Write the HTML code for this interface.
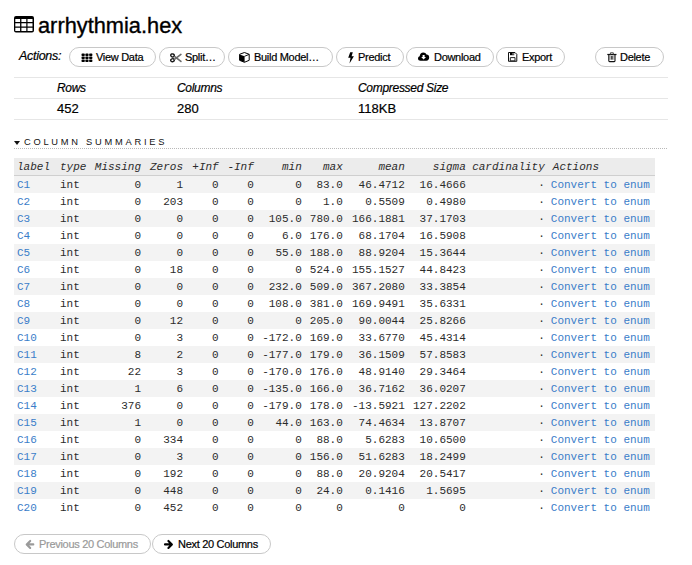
<!DOCTYPE html>
<html><head><meta charset="utf-8">
<style>
html,body{margin:0;padding:0;background:#fff;}
body{width:692px;height:565px;overflow:hidden;position:relative;font-family:"Liberation Sans",sans-serif;color:#000;}
.btn .tx,.th2,.td2,.actlbl{-webkit-text-stroke:0.2px currentColor;}
.abs{position:absolute;}
.title{left:38px;top:11px;font-size:21.8px;line-height:30px;white-space:nowrap;color:#000;-webkit-text-stroke:0.35px #000;}
.ticon{left:13.7px;top:16.1px;line-height:0;}
.actlbl{left:19px;top:48px;font-size:12.5px;letter-spacing:-0.3px;font-style:italic;line-height:16px;color:#000;}
.btn{position:absolute;top:47px;height:18px;border:1px solid #c8c8c8;border-radius:10px;box-sizing:content-box;font-size:11px;letter-spacing:-0.3px;line-height:18px;white-space:nowrap;color:#000;background:#fff;}
.btn svg{position:absolute;}
.btn .tx{position:absolute;top:0;}
.hline{position:absolute;left:14px;width:654px;height:1px;background:#e6e6e6;}
.th2{position:absolute;font-style:italic;font-size:12px;letter-spacing:-0.3px;line-height:14px;white-space:nowrap;}
.td2{position:absolute;font-size:13px;line-height:14px;white-space:nowrap;}
.sect{left:24px;top:135.4px;font-size:9.3px;letter-spacing:2.75px;line-height:14px;white-space:nowrap;color:#111;}
.tri{left:14px;top:141px;width:0;height:0;border-left:3px solid transparent;border-right:3px solid transparent;border-top:4px solid #111;}
.dots{position:absolute;left:14px;top:148px;width:654px;height:1px;background:repeating-linear-gradient(to right,#b8b8b8 0,#b8b8b8 1px,transparent 1px,transparent 2px);}
table.cs{position:absolute;left:14px;top:158px;border-collapse:collapse;font-family:"Liberation Mono",monospace;font-size:11px;color:#2b2b2b;table-layout:fixed;}
table.cs th{background:#ececec;font-style:italic;font-weight:normal;height:17px;padding:0 4px;text-align:right;border-bottom:1px solid #cfcfcf;white-space:nowrap;}
table.cs td{height:17px;padding:0 4px;text-align:right;white-space:nowrap;}
table.cs tr:nth-child(odd) td{background:#f3f3f3;}
table.cs th:nth-child(1),table.cs th:nth-child(2),table.cs td:nth-child(1),table.cs td:nth-child(2),table.cs th:nth-child(12),table.cs td:nth-child(12){text-align:left;}
table.cs a{color:#3a7dc9;}
table.cs td:nth-child(12) a{margin-left:-2px;}
table.cs th:nth-child(12),table.cs td:nth-child(12){padding:0 0 0 4px;}
table.cs th:nth-child(11),table.cs td:nth-child(11){padding:0 4px 0 1px;}
table.cs th:nth-child(2),table.cs td:nth-child(2){padding:0 3px 0 4px;}
table.cs th:nth-child(1),table.cs td:nth-child(1){padding:0 5px 0 3px;}
</style></head><body>
<div class="abs ticon"><svg width="20" height="17" viewBox="0 0 20 17"><path fill="#000" fill-rule="evenodd" d="M2 0h16a2 2 0 0 1 2 2v12.6a2 2 0 0 1-2 2H2a2 2 0 0 1-2-2V2a2 2 0 0 1 2-2z M1.3 3h4.8v2.9H1.3z M7.4 3h4.9v2.9H7.4z M13.5 3h5v2.9h-5z M1.3 7.3h4.8v3.1H1.3z M7.4 7.3h4.9v3.1H7.4z M13.5 7.3h5v3.1h-5z M1.3 11.7h4.8v3.4H1.3z M7.4 11.7h4.9v3.4H7.4z M13.5 11.7h5v3.4h-5z"/></svg></div>
<div class="abs title">arrhythmia.hex</div>
<div class="abs actlbl">Actions:</div>

<div class="btn" style="left:69px;width:85px">
<svg style="left:10.5px;top:5px" width="12" height="10" viewBox="0 0 12 10"><g fill="#000"><rect x="0.5" y="0.6" width="3.3" height="2.5" rx="0.8"/><rect x="4.3" y="0.6" width="3.3" height="2.5" rx="0.8"/><rect x="8.1" y="0.6" width="3.3" height="2.5" rx="0.8"/><rect x="0.5" y="3.6" width="3.3" height="2.5" rx="0.8"/><rect x="4.3" y="3.6" width="3.3" height="2.5" rx="0.8"/><rect x="8.1" y="3.6" width="3.3" height="2.5" rx="0.8"/><rect x="0.5" y="6.6" width="3.3" height="2.5" rx="0.8"/><rect x="4.3" y="6.6" width="3.3" height="2.5" rx="0.8"/><rect x="8.1" y="6.6" width="3.3" height="2.5" rx="0.8"/></g></svg>
<span class="tx" style="left:26px">View Data</span></div>

<div class="btn" style="left:159px;width:64px">
<svg style="left:10px;top:5px" width="12" height="10" viewBox="0 0 12 10"><g fill="none" stroke="#1a1a1a" stroke-width="1.4"><ellipse cx="2.5" cy="2.4" rx="1.8" ry="1.5" transform="rotate(20 2.5 2.4)"/><ellipse cx="2.5" cy="7.2" rx="1.8" ry="1.5" transform="rotate(-20 2.5 7.2)"/></g><path d="M4.8 3.6L10.9 8.4M4.8 6.2L10.9 1.4" stroke="#6a6a6a" stroke-width="1.6" stroke-linecap="round" fill="none"/></svg>
<span class="tx" style="left:25px">Split…</span></div>

<div class="btn" style="left:228px;width:103px">
<svg style="left:10px;top:4px" width="12" height="11" viewBox="0 0 12 11"><path d="M5.4 0.5L10.2 2.3V8.3L5.4 10.3L0.6 8.3V2.3Z" fill="none" stroke="#000" stroke-width="1" stroke-linejoin="round"/><path d="M0.6 2.5L5.6 4.3V10.3L0.6 8.3Z" fill="#000"/><path d="M5.5 4.3L10.2 2.4" stroke="#000" stroke-width="0.9"/></svg>
<span class="tx" style="left:25px">Build Model…</span></div>

<div class="btn" style="left:336px;width:66px">
<svg style="left:11px;top:4px" width="6" height="12" viewBox="0 0 6 12"><path d="M2.2 0.3H4.8L3.6 4.2H5.9L1.5 11.6L2.5 5.8H0.2Z" fill="#000"/></svg>
<span class="tx" style="left:21px">Predict</span></div>

<div class="btn" style="left:406px;width:86px">
<svg style="left:11px;top:4px" width="12" height="10" viewBox="0 0 12 10"><path d="M2.5 8.8C1.1 8.8 0 7.8 0 6.5C0 5.4 0.7 4.6 1.7 4.3C1.8 2.1 3.3 0.4 5.3 0.4C6.8 0.4 8 1.3 8.5 2.5C10.3 2.5 11.2 3.8 11.2 5.6C11.2 7.4 10 8.8 8.4 8.8Z" fill="#000"/><path d="M4.6 3H6.6V5.1H8L5.6 7.5L3.2 5.1H4.6Z" fill="#fff"/></svg>
<span class="tx" style="left:27px">Download</span></div>

<div class="btn" style="left:496px;width:67px">
<svg style="left:11px;top:4px" width="10" height="11" viewBox="0 0 10 11"><path d="M0.5 0.5H7L8.8 2.3V9.3H0.5Z" fill="none" stroke="#111" stroke-width="1"/><rect x="2" y="0.6" width="4.2" height="2.6" fill="#000"/><rect x="4.6" y="1" width="0.9" height="1.7" fill="#fff"/><path d="M2.3 5.6H7V8.9H2.3Z" fill="none" stroke="#222" stroke-width="1"/></svg>
<span class="tx" style="left:25px">Export</span></div>

<div class="btn" style="left:595px;width:67px">
<svg style="left:11px;top:3.8px" width="10" height="11" viewBox="0 0 10 11"><path d="M0.3 2.5H9.5" stroke="#111" stroke-width="1.2"/><path d="M3.2 2.2L3.8 0.8H6L6.6 2.2" fill="none" stroke="#555" stroke-width="1.1"/><rect x="2.4" y="3.2" width="5" height="4.6" fill="#b8b8b8"/><path d="M1.8 2.6V8.8Q1.8 9.6 2.6 9.6H7.2Q8 9.6 8 8.8V2.6" fill="none" stroke="#111" stroke-width="1.1"/><path d="M4.9 4V7.4" stroke="#111" stroke-width="1.1"/></svg>
<span class="tx" style="left:24px">Delete</span></div>

<div class="hline" style="top:77px"></div>
<div class="hline" style="top:98px"></div>
<div class="hline" style="top:119px"></div>
<div class="th2" style="left:57px;top:81px">Rows</div>
<div class="th2" style="left:177px;top:81px">Columns</div>
<div class="th2" style="left:358px;top:81px">Compressed Size</div>
<div class="td2" style="left:57px;top:102px">452</div>
<div class="td2" style="left:177px;top:102px">280</div>
<div class="td2" style="left:358px;top:102px">118KB</div>
<div class="abs tri"></div>
<div class="abs sect">COLUMN SUMMARIES</div>
<div class="dots"></div>
<table class="cs">
<colgroup><col style="width:42px"><col style="width:34px"><col style="width:55px"><col style="width:42px"><col style="width:35.7px"><col style="width:35.1px"><col style="width:48px"><col style="width:41px"><col style="width:62px"><col style="width:61px"><col style="width:79px"><col style="width:106.5px"></colgroup>
<thead><tr><th>label</th><th>type</th><th>Missing</th><th>Zeros</th><th>+Inf</th><th>-Inf</th><th>min</th><th>max</th><th>mean</th><th>sigma</th><th>cardinality</th><th>Actions</th></tr></thead>
<tbody>
<tr><td><a>C1</a></td><td>int</td><td>0</td><td>1</td><td>0</td><td>0</td><td>0</td><td>83.0</td><td>46.4712</td><td>16.4666</td><td>·</td><td><a>Convert to enum</a></td></tr>
<tr><td><a>C2</a></td><td>int</td><td>0</td><td>203</td><td>0</td><td>0</td><td>0</td><td>1.0</td><td>0.5509</td><td>0.4980</td><td>·</td><td><a>Convert to enum</a></td></tr>
<tr><td><a>C3</a></td><td>int</td><td>0</td><td>0</td><td>0</td><td>0</td><td>105.0</td><td>780.0</td><td>166.1881</td><td>37.1703</td><td>·</td><td><a>Convert to enum</a></td></tr>
<tr><td><a>C4</a></td><td>int</td><td>0</td><td>0</td><td>0</td><td>0</td><td>6.0</td><td>176.0</td><td>68.1704</td><td>16.5908</td><td>·</td><td><a>Convert to enum</a></td></tr>
<tr><td><a>C5</a></td><td>int</td><td>0</td><td>0</td><td>0</td><td>0</td><td>55.0</td><td>188.0</td><td>88.9204</td><td>15.3644</td><td>·</td><td><a>Convert to enum</a></td></tr>
<tr><td><a>C6</a></td><td>int</td><td>0</td><td>18</td><td>0</td><td>0</td><td>0</td><td>524.0</td><td>155.1527</td><td>44.8423</td><td>·</td><td><a>Convert to enum</a></td></tr>
<tr><td><a>C7</a></td><td>int</td><td>0</td><td>0</td><td>0</td><td>0</td><td>232.0</td><td>509.0</td><td>367.2080</td><td>33.3854</td><td>·</td><td><a>Convert to enum</a></td></tr>
<tr><td><a>C8</a></td><td>int</td><td>0</td><td>0</td><td>0</td><td>0</td><td>108.0</td><td>381.0</td><td>169.9491</td><td>35.6331</td><td>·</td><td><a>Convert to enum</a></td></tr>
<tr><td><a>C9</a></td><td>int</td><td>0</td><td>12</td><td>0</td><td>0</td><td>0</td><td>205.0</td><td>90.0044</td><td>25.8266</td><td>·</td><td><a>Convert to enum</a></td></tr>
<tr><td><a>C10</a></td><td>int</td><td>0</td><td>3</td><td>0</td><td>0</td><td>-172.0</td><td>169.0</td><td>33.6770</td><td>45.4314</td><td>·</td><td><a>Convert to enum</a></td></tr>
<tr><td><a>C11</a></td><td>int</td><td>8</td><td>2</td><td>0</td><td>0</td><td>-177.0</td><td>179.0</td><td>36.1509</td><td>57.8583</td><td>·</td><td><a>Convert to enum</a></td></tr>
<tr><td><a>C12</a></td><td>int</td><td>22</td><td>3</td><td>0</td><td>0</td><td>-170.0</td><td>176.0</td><td>48.9140</td><td>29.3464</td><td>·</td><td><a>Convert to enum</a></td></tr>
<tr><td><a>C13</a></td><td>int</td><td>1</td><td>6</td><td>0</td><td>0</td><td>-135.0</td><td>166.0</td><td>36.7162</td><td>36.0207</td><td>·</td><td><a>Convert to enum</a></td></tr>
<tr><td><a>C14</a></td><td>int</td><td>376</td><td>0</td><td>0</td><td>0</td><td>-179.0</td><td>178.0</td><td>-13.5921</td><td>127.2202</td><td>·</td><td><a>Convert to enum</a></td></tr>
<tr><td><a>C15</a></td><td>int</td><td>1</td><td>0</td><td>0</td><td>0</td><td>44.0</td><td>163.0</td><td>74.4634</td><td>13.8707</td><td>·</td><td><a>Convert to enum</a></td></tr>
<tr><td><a>C16</a></td><td>int</td><td>0</td><td>334</td><td>0</td><td>0</td><td>0</td><td>88.0</td><td>5.6283</td><td>10.6500</td><td>·</td><td><a>Convert to enum</a></td></tr>
<tr><td><a>C17</a></td><td>int</td><td>0</td><td>3</td><td>0</td><td>0</td><td>0</td><td>156.0</td><td>51.6283</td><td>18.2499</td><td>·</td><td><a>Convert to enum</a></td></tr>
<tr><td><a>C18</a></td><td>int</td><td>0</td><td>192</td><td>0</td><td>0</td><td>0</td><td>88.0</td><td>20.9204</td><td>20.5417</td><td>·</td><td><a>Convert to enum</a></td></tr>
<tr><td><a>C19</a></td><td>int</td><td>0</td><td>448</td><td>0</td><td>0</td><td>0</td><td>24.0</td><td>0.1416</td><td>1.5695</td><td>·</td><td><a>Convert to enum</a></td></tr>
<tr><td><a>C20</a></td><td>int</td><td>0</td><td>452</td><td>0</td><td>0</td><td>0</td><td>0</td><td>0</td><td>0</td><td>·</td><td><a>Convert to enum</a></td></tr>
</tbody></table>

<div class="btn" style="left:14px;top:534px;width:135px;color:#999">
<svg style="left:10px;top:4px" width="12" height="12" viewBox="0 0 12 12"><path d="M8.3 5.4H2.2M5.2 1.9L1.7 5.4L5.2 8.9" fill="none" stroke="#9a9a9a" stroke-width="2.1" stroke-linecap="round" stroke-linejoin="round"/></svg>
<span class="tx" style="left:24px">Previous 20 Columns</span></div>
<div class="btn" style="left:152px;top:534px;width:117px">
<svg style="left:10px;top:4px" width="12" height="12" viewBox="0 0 12 12"><path d="M2 5.4H8.3M5.4 1.9L8.9 5.4L5.4 8.9" fill="none" stroke="#000" stroke-width="2.1" stroke-linecap="round" stroke-linejoin="round"/></svg>
<span class="tx" style="left:25px">Next 20 Columns</span></div>
</body></html>
